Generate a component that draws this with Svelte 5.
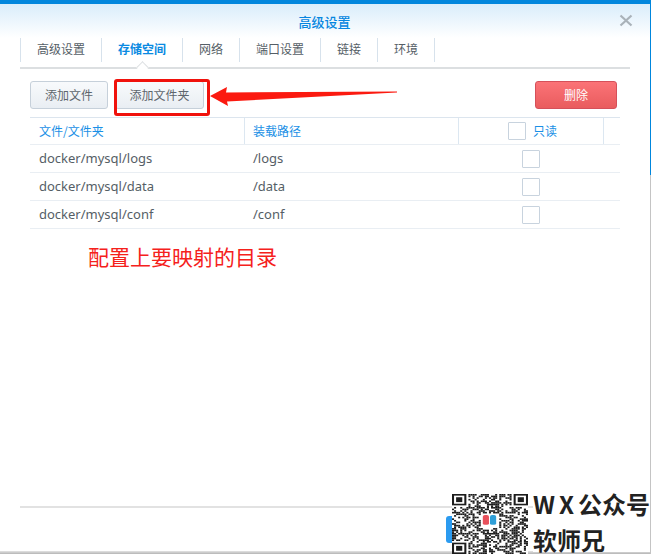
<script lang="ts">
  const tabs = ["高级设置", "存储空间", "网络", "端口设置", "链接", "环境"];
  const rows = [
    { file: "docker/mysql/logs", mount: "/logs" },
    { file: "docker/mysql/data", mount: "/data" },
    { file: "docker/mysql/conf", mount: "/conf" },
  ];

  // fake qr pattern, modules on a 37 grid
  const size = 37;
  const finders = [
    [0, 0],
    [size - 7, 0],
    [0, size - 7],
  ];
  function inFinder(x: number, y: number) {
    return finders.some(
      ([fx, fy]) => x >= fx - 1 && x <= fx + 7 && y >= fy - 1 && y <= fy + 7,
    );
  }
  let seed = 7;
  function next() {
    seed = (seed * 1103515245 + 12345) & 0x7fffffff;
    return (seed >> 16) & 1;
  }
  const modules: { x: number; y: number }[] = [];
  for (let y = 0; y < size; y++) {
    for (let x = 0; x < size; x++) {
      const on = next();
      const center = Math.abs(x - 18) < 5 && Math.abs(y - 16) < 5;
      if (on && !inFinder(x, y) && !center) modules.push({ x, y });
    }
  }
</script>

<div class="window">
  <header class="title-bar">
    <h1>高级设置</h1>
    <svg class="close" width="14" height="14" viewBox="0 0 14 14">
      <path d="M1.5 1.5l11 10M12.5 1.5l-11 10" stroke="#a9b2b9" stroke-width="2.2" fill="none" />
    </svg>
  </header>

  <nav class="tabs">
    {#each tabs as tab, i}
      <div class="tab" class:active={i === 1}>{tab}</div>
    {/each}
  </nav>

  <div class="toolbar">
    <button class="btn">添加文件</button>
    <button class="btn wide">添加文件夹</button>
    <button class="btn danger">删除</button>
  </div>

  <div class="table">
    <div class="row head">
      <div class="cell">文件/文件夹</div>
      <div class="cell">装载路径</div>
      <div class="cell check-cell"><span class="box"></span><span class="label">只读</span></div>
      <div class="cell"></div>
    </div>
    {#each rows as row}
      <div class="row">
        <div class="cell">{row.file}</div>
        <div class="cell">{row.mount}</div>
        <div class="cell check-cell"><span class="box"></span></div>
        <div class="cell"></div>
      </div>
    {/each}
  </div>

  <p class="note">配置上要映射的目录</p>

  <div class="spacer"></div>
  <footer class="footer"></footer>
  <div class="bottom-shadow"></div>

  <!-- annotations on top of the screenshot -->
  <div class="red-box"></div>
  <svg class="arrow" width="190" height="24" viewBox="0 0 190 24">
    <path d="M0 12 L17 3 L16 8.5 L187 7.5 L187 8.5 L17 17.5 L18 22 Z" fill="#fb1a10" />
  </svg>

  <div class="blue-tab"></div>
  <div class="promo">
    <svg class="qr" width="76" height="60" viewBox="0 0 37 37" preserveAspectRatio="none">
      <rect width="37" height="37" fill="#fff" />
      {#each modules as m}
        <rect x={m.x} y={m.y} width="1" height="1" fill="#1c1c1c" />
      {/each}
      {#each finders as [fx, fy]}
        <rect x={fx + 0.5} y={fy + 0.5} width="6" height="6" fill="none" stroke="#1c1c1c" />
        <rect x={fx + 2} y={fy + 2} width="3" height="3" fill="#1c1c1c" />
      {/each}
      <rect x="15" y="13" width="3" height="6" rx="1" fill="#e8505b" />
      <rect x="18.5" y="13" width="3" height="6" rx="1" fill="#2f9fd8" />
    </svg>
    <div class="promo-text">
      <span><span class="wx">WX</span>公众号</span>
      <span>软师兄</span>
    </div>
  </div>
  <div class="edge"></div>
</div>

<style>
  :global(body) {
    margin: 0;
    background: #fff;
  }
  .window {
    position: relative;
    width: 651px;
    height: 554px;
    overflow: hidden;
    display: flex;
    flex-direction: column;
    background: #fff;
    font-family: "Noto Sans CJK SC", sans-serif;
    font-size: 12px;
    color: #555e66;
    box-sizing: border-box;
    border-top: 4px solid #0086dd;
  }
  .title-bar {
    position: relative;
    height: 34px;
    flex: none;
    display: flex;
    align-items: center;
    justify-content: center;
    background: linear-gradient(#d9edfb, #fff);
  }
  h1 {
    margin: 0 2px 0 0;
    font-size: 13px;
    font-weight: 500;
    color: #0686e0;
  }
  .close {
    position: absolute;
    right: 18px;
    top: 10px;
  }
  .tabs {
    flex: none;
    display: flex;
    height: 31px;
    margin-left: 20px;
    width: 610px;
    box-sizing: border-box;
    border-bottom: 2px solid #dcdfe1;
    align-items: flex-start;
  }
  .tab {
    position: relative;
    height: 24px;
    line-height: 21px;
    padding: 0 16px;
    border-right: 1px solid #d7e2ec;
    white-space: nowrap;
  }
  .tab:first-child {
    border-left: 1px solid #d7e2ec;
  }
  .tab.active {
    color: #0a8ae2;
    font-weight: 700;
  }
  .tab.active::after {
    content: "";
    position: absolute;
    left: 50%;
    top: 25px;
    width: 8px;
    height: 8px;
    margin-left: -4px;
    background: #fff;
    border-left: 1px solid #dcdfe1;
    border-top: 1px solid #dcdfe1;
    transform: rotate(45deg);
  }
  .toolbar {
    flex: none;
    display: flex;
    gap: 7px;
    padding: 12px 34px 8px 30px;
  }
  .btn {
    height: 28px;
    width: 78px;
    padding: 0 0 2px;
    box-sizing: border-box;
    border: 1px solid #c6d0da;
    border-radius: 3px;
    background: linear-gradient(#f8fafc, #e9eef3);
    color: #5e666d;
    font: inherit;
  }
  .btn.wide {
    width: 89px;
  }
  .btn.danger {
    margin-left: auto;
    width: 82px;
    border-color: #d5505a;
    background: linear-gradient(#fb7377, #e95c5e);
    color: #fff;
  }
  .table {
    flex: none;
    margin-left: 30px;
    width: 590px;
    border-top: 1px solid #dce5ee;
  }
  .row {
    display: grid;
    grid-template-columns: 215px 214px 145px 16px;
    height: 28px;
    box-sizing: border-box;
    border-bottom: 1px solid #e9eef3;
    align-items: stretch;
  }
  .row.head {
    height: 27px;
    color: #1a90e6;
  }
  .row:not(.head) {
    font-family: "Noto Sans", sans-serif;
    font-size: 13px;
  }
  .cell {
    display: flex;
    align-items: center;
    padding: 0 0 2px 9px;
    min-width: 0;
  }
  .cell:nth-child(2) {
    padding-left: 8px;
  }
  .row.head .cell {
    border-right: 1px solid #dce7f1;
  }
  .row.head .cell:last-child {
    border-right: none;
  }
  .check-cell {
    justify-content: center;
    gap: 7px;
    padding: 0 2px 0 0;
  }
  .row.head .check-cell {
    padding: 0 0 0 3px;
  }
  .label {
    margin-bottom: 2px;
  }
  .box {
    display: block;
    width: 18px;
    height: 18px;
    box-sizing: border-box;
    border: 1px solid #c8d3de;
    border-radius: 1px;
    background: #fff;
  }
  .note {
    flex: none;
    margin: 13px 0 0 88px;
    font-size: 21px;
    line-height: 29px;
    color: #f5211c;
  }
  .spacer {
    flex: 1;
  }
  .footer {
    flex: none;
    height: 45px;
    box-sizing: border-box;
    margin-left: 20px;
    border-top: 2px solid #e2e2e2;
  }
  .bottom-shadow {
    flex: none;
    height: 3px;
    background: linear-gradient(#e4e4e4, #b4b4b4);
  }
  .red-box {
    position: absolute;
    left: 114px;
    top: 75px;
    width: 96px;
    height: 37px;
    box-sizing: border-box;
    border: 3px solid #f0120c;
    border-radius: 3px;
  }
  .arrow {
    position: absolute;
    left: 210px;
    top: 80px;
  }
  .blue-tab {
    position: absolute;
    left: 446px;
    top: 512px;
    width: 10px;
    height: 27px;
    border-radius: 3px 0 0 3px;
    background: #2b9bf0;
  }
  .promo {
    position: absolute;
    left: 452px;
    top: 490px;
    display: flex;
    gap: 5px;
    height: 60px;
  }
  .qr {
    display: block;
  }
  .promo-text {
    display: flex;
    flex-direction: column;
    gap: 12px;
    margin-top: -2px;
    height: 60px;
    font-size: 24px;
    line-height: 24px;
    font-weight: 700;
    color: #222;
    white-space: nowrap;
    background: #fff;
  }
  .wx {
    letter-spacing: 4px;
  }
  .edge {
    position: absolute;
    right: 0;
    top: -4px;
    bottom: 0;
    width: 1px;
    background: linear-gradient(#0086dd 0 175px, #c4c4c4 175px);
  }
</style>
